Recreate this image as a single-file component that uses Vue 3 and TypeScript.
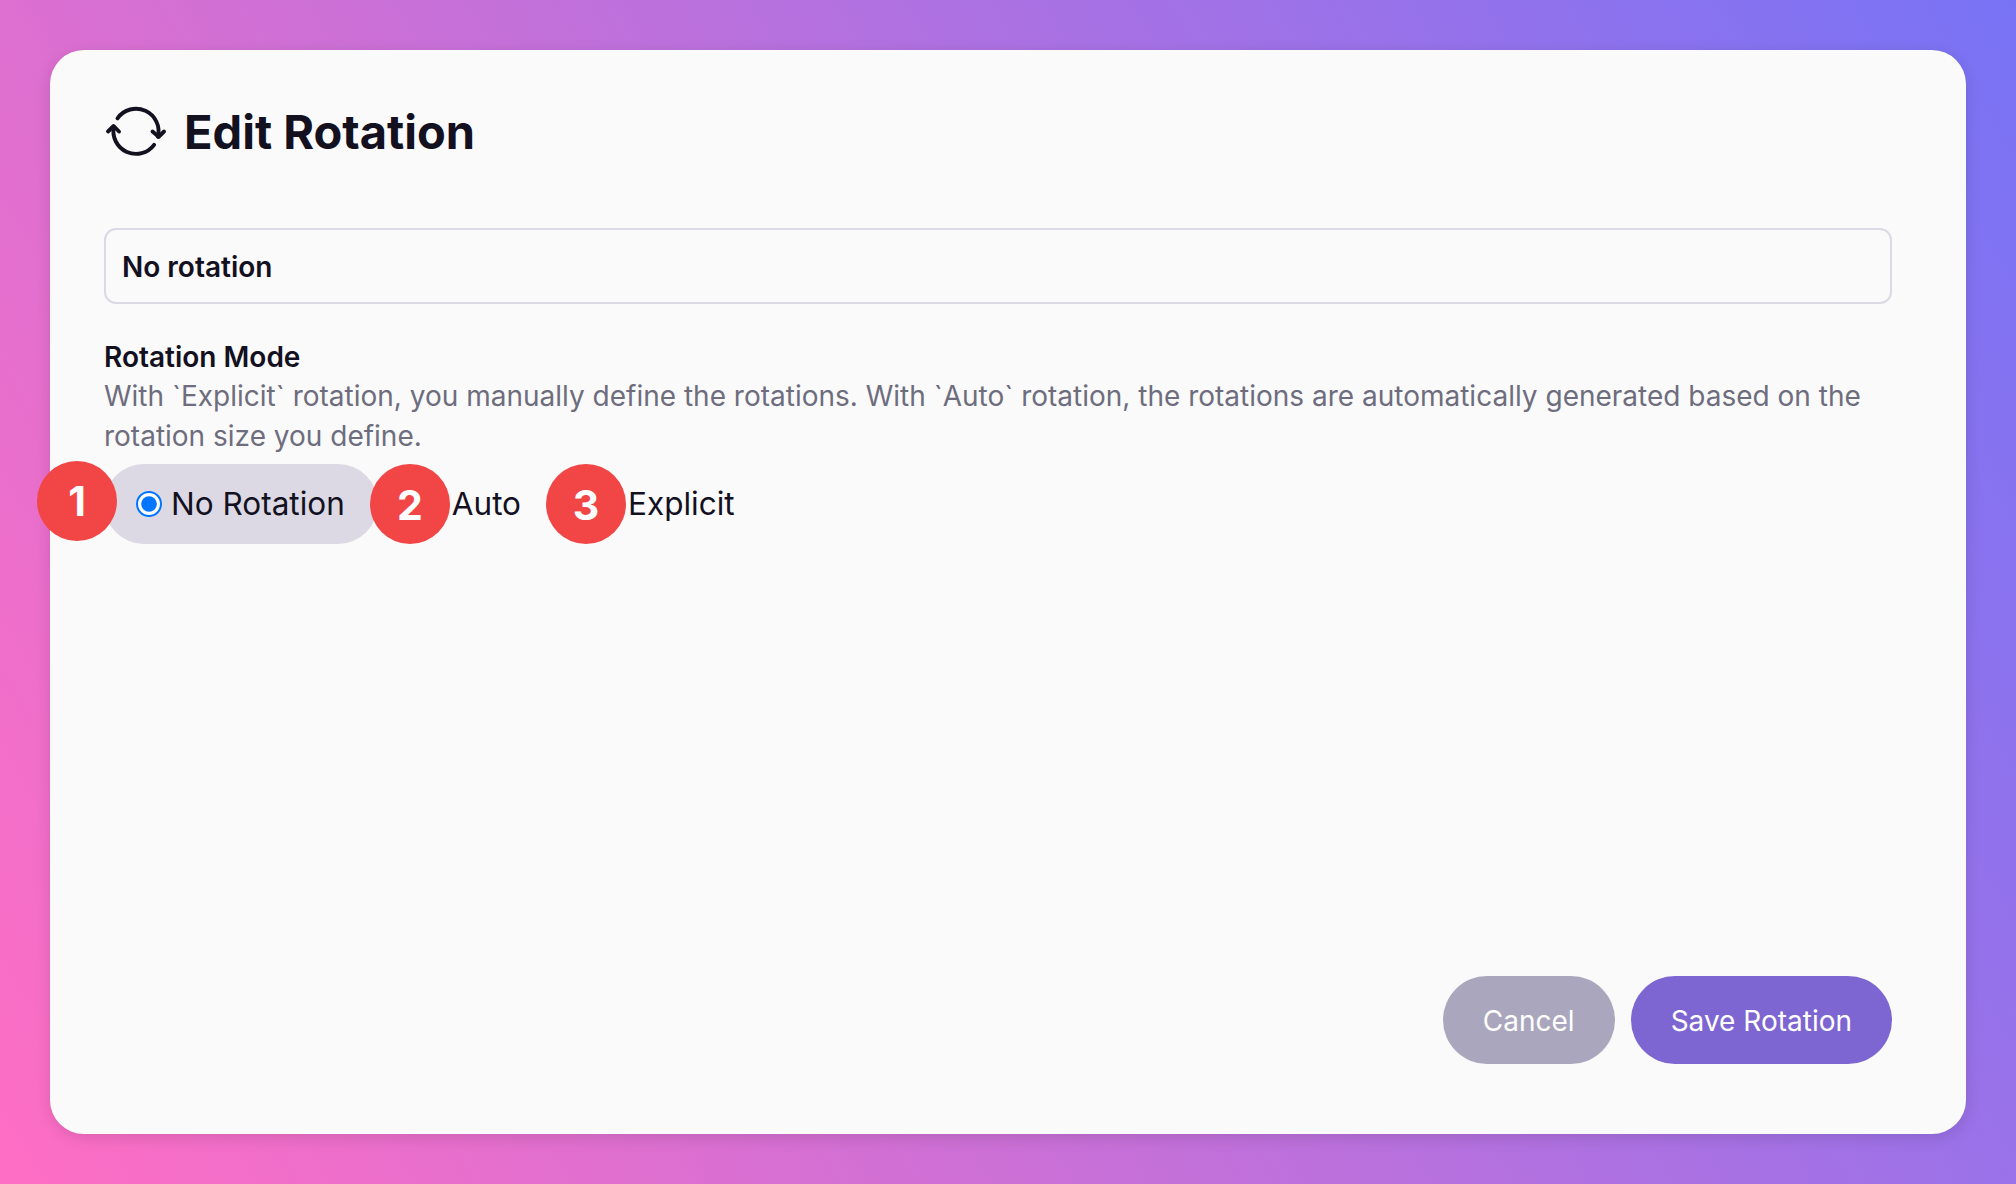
<script setup lang="ts">
const modes: { label: string; checked: boolean }[] = [
  { label: 'No Rotation', checked: true },
  { label: 'Auto', checked: false },
  { label: 'Explicit', checked: false },
]
</script>

<template>
  <div class="page">
    <main class="card">
      <header class="head">
        <svg class="icon" viewBox="0 0 60 60" fill="none" stroke="#13111f" stroke-width="3.9" stroke-linecap="round" stroke-linejoin="round">
          <path d="M11.5 16.3 A22.6 22.6 0 0 1 51.9 34.8" />
          <path d="M46.5 29.5 L52.7 34.8 L58 29.5" />
          <path d="M7.8 25 A22.6 22.6 0 0 0 48.1 42.8" />
          <path d="M2 29.5 L7.6 24 L13 29.5" />
        </svg>
        <h1 class="title">Edit Rotation</h1>
      </header>
      <div class="input">No rotation</div>
      <div class="label">Rotation Mode</div>
      <p class="desc">With `Explicit` rotation, you manually define the rotations. With `Auto` rotation, the rotations are automatically generated based on the rotation size you define.</p>
      <div class="modes">
        <label v-for="m in modes" :key="m.label" class="mode" :class="{ active: m.checked }">
          <input type="radio" name="mode" :checked="m.checked" />
          <span>{{ m.label }}</span>
        </label>
        <span class="badge b1">1</span>
        <span class="badge b2">2</span>
        <span class="badge b3">3</span>
      </div>
      <footer class="foot">
        <button class="btn cancel" type="button">Cancel</button>
        <button class="btn save" type="button">Save Rotation</button>
      </footer>
    </main>
  </div>
</template>

<style>
html, body { margin: 0; }
</style>

<style scoped>
.page {
  box-sizing: border-box;
  height: 1184px;
  padding: 50px;
  background: linear-gradient(60deg, #ff6ec4, #7873f5);
  font-family: Inter, "Liberation Sans", sans-serif;
  color: #13111f;
}
.card {
  box-sizing: border-box;
  height: 1084px;
  padding: 52px 74px 70px 54px;
  background: #fafafa;
  border-radius: 34px;
  box-shadow: 0 4px 16px rgba(0, 0, 0, 0.12);
  display: flex;
  flex-direction: column;
}
.head {
  display: flex;
  align-items: center;
  gap: 18px;
  height: 60px;
  margin-left: 2px;
}
.icon { width: 60px; height: 60px; overflow: visible; flex: none; }
.title { margin: 0; font-size: 47px; font-weight: 700; line-height: 60px; }
.input {
  box-sizing: border-box;
  margin-top: 66px;
  height: 76px;
  padding: 0 16px;
  border: 2px solid #dbd9e3;
  border-radius: 12px;
  font-size: 28px;
  font-weight: 600;
  line-height: 74px;
}
.label { margin-top: 32px; font-size: 28px; font-weight: 600; line-height: 42px; margin-bottom: -2px; }
.desc { margin: 0; font-size: 28px; line-height: 40px; color: #6e6d7e; }
.modes { position: relative; display: flex; gap: 6.5px; margin-top: 8px; }
.mode {
  display: flex;
  align-items: center;
  gap: 9px;
  height: 80px;
  padding: 0 33.5px 0 32px;
  border-radius: 40px;
  font-size: 31.5px;
  line-height: 78px;
}
.mode.active { background: #dcd9e4; }
.mode input { width: 13px; height: 13px; margin: 0; zoom: 2; accent-color: #0075ff; }
.badge {
  position: absolute;
  box-sizing: border-box;
  width: 80px;
  height: 80px;
  padding-top: 2px;
  border-radius: 50%;
  background: #f24646;
  color: #fff;
  font-size: 41px;
  font-weight: 700;
  display: flex;
  align-items: center;
  justify-content: center;
}
.b1 { left: -67px; top: -3px; padding-top: 0; }
.b2 { left: 266px; top: 0; }
.b3 { left: 442px; top: 0; }
.foot { margin-top: auto; display: flex; justify-content: flex-end; gap: 16px; }
.btn {
  height: 88px;
  padding: 1px 40px 0;
  border: 0;
  border-radius: 44px;
  color: #fff;
  font-family: inherit;
  font-size: 28px;
}
.cancel { background: #aaa6bd; }
.save { background: #7d66d2; }
</style>
